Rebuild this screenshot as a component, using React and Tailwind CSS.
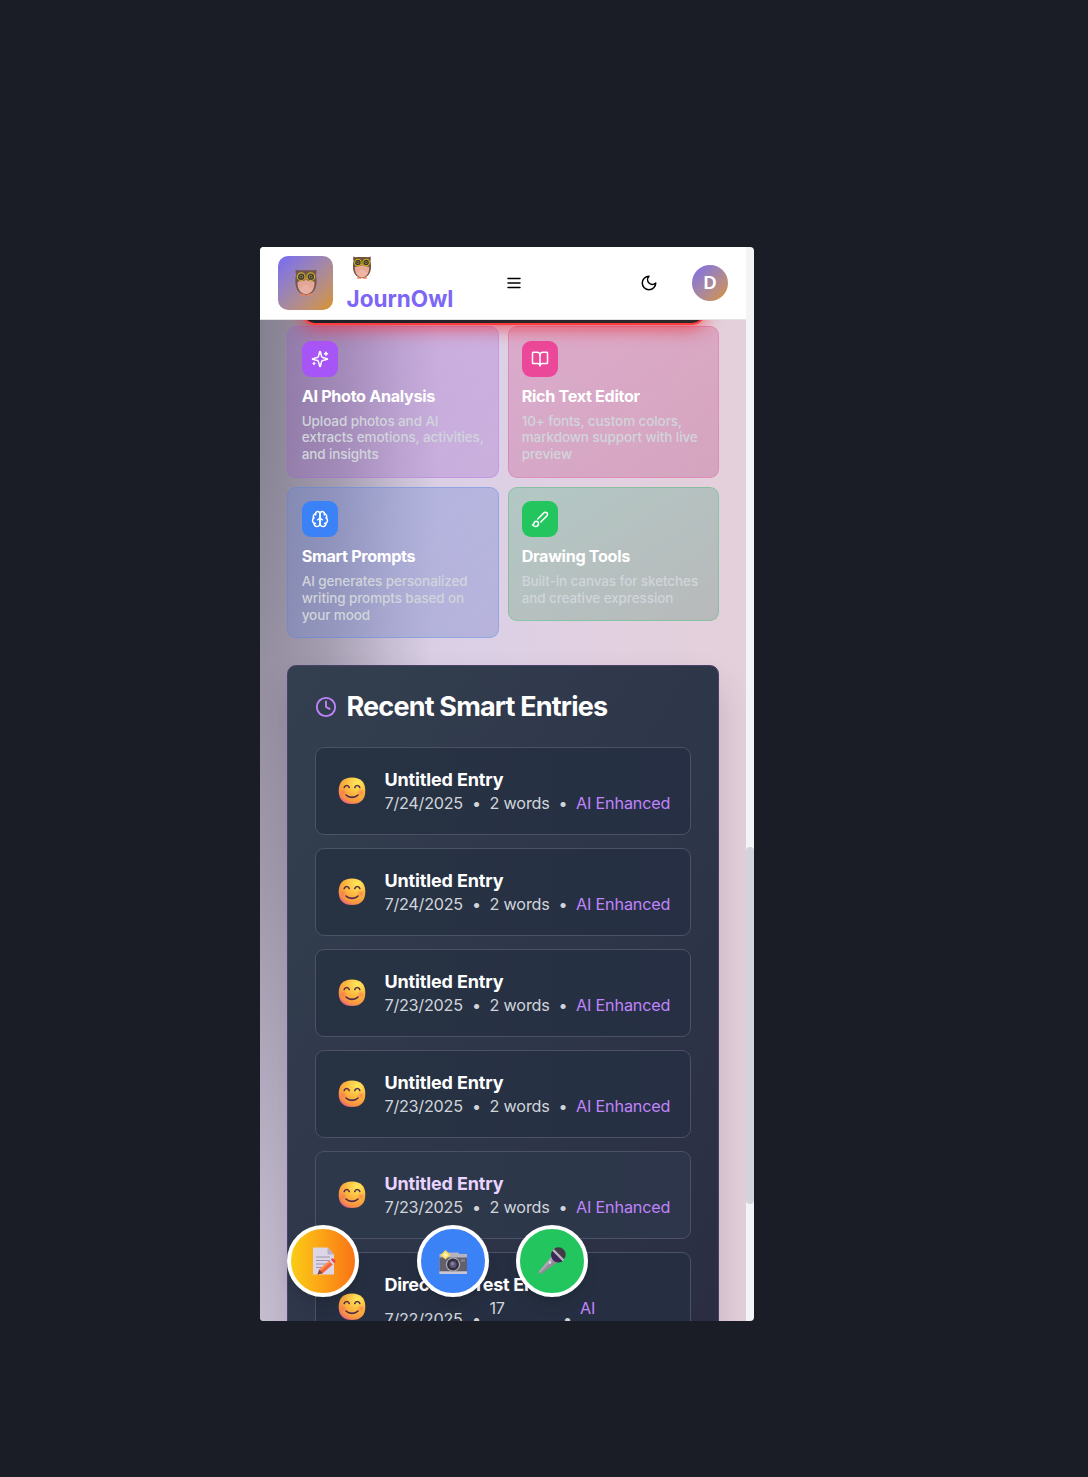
import React from "react";
import { BookOpen, Clock } from "lucide-react";

function Stroke({ size = 18, paths, className }) {
  return (
    <svg width={size} height={size} viewBox="0 0 24 24" fill="none" stroke="currentColor" strokeWidth="2" strokeLinecap="round" strokeLinejoin="round" className={className}>
      {paths.map((d) => <path key={d} d={d} />)}
    </svg>
  );
}

const Menu = (p) => <Stroke {...p} paths={["M4 6h16", "M4 12h16", "M4 18h16"]} />;
const Moon = (p) => <Stroke {...p} paths={["M12 3a6 6 0 0 0 9 9 9 9 0 1 1-9-9Z"]} />;
const Sparkles = (p) => (
  <Stroke {...p} paths={[
    "M9.937 15.5A2 2 0 0 0 8.5 14.063l-6.135-1.582a.5.5 0 0 1 0-.962L8.5 9.936A2 2 0 0 0 9.937 8.5l1.582-6.135a.5.5 0 0 1 .963 0L14.063 8.5A2 2 0 0 0 15.5 9.937l6.135 1.581a.5.5 0 0 1 0 .964L15.5 14.063a2 2 0 0 0-1.437 1.437l-1.582 6.135a.5.5 0 0 1-.963 0z",
    "M20 3v4", "M22 5h-4", "M4 17v2", "M5 18H3",
  ]} />
);
const Brain = (p) => (
  <Stroke {...p} paths={[
    "M12 5a3 3 0 1 0-5.997.125 4 4 0 0 0-2.526 5.77 4 4 0 0 0 .556 6.588A4 4 0 1 0 12 18Z",
    "M12 5a3 3 0 1 1 5.997.125 4 4 0 0 1 2.526 5.77 4 4 0 0 1-.556 6.588A4 4 0 1 1 12 18Z",
    "M15 13a4.5 4.5 0 0 1-3-4 4.5 4.5 0 0 1-3 4",
    "M17.599 6.5a3 3 0 0 0 .399-1.375", "M6.003 5.125A3 3 0 0 0 6.401 6.5",
    "M3.477 10.896a4 4 0 0 1 .585-.396", "M19.938 10.5a4 4 0 0 1 .585.396",
    "M6 18a4 4 0 0 1-1.967-.516", "M19.967 17.484A4 4 0 0 1 18 18",
  ]} />
);
const Brush = (p) => (
  <Stroke {...p} paths={[
    "m9.06 11.9 8.07-8.06a2.85 2.85 0 1 1 4.03 4.03l-8.06 8.08",
    "M7.07 14.94c-1.66 0-3 1.35-3 3.02 0 1.33-2.5 1.52-2 2.02 1.08 1.1 2.49 2.02 4 2.02 2.2 0 4-1.8 4-4.04a3.01 3.01 0 0 0-3-3.02z",
  ]} />
);

function Owl({ className }) {
  return (
    <svg viewBox="0 0 22 28" className={className}>
      <path d="M5 26h5v1.6H5zM12 26h5v1.6h-5z" fill="#ff7f50" />
      <path d="M.5.5C2 1.6 4.5 1.4 7 1.2h8c2.500.2 5 .4 6.500-.7.5 2 .2 4-.2 5.500.5 2 .7 4 .7 7 0 8-4 13.500-11 13.500S0 21 0 13c0-3 .2-5 .7-7C.3 4.500 0 2.500.5.500z" fill="#70503f" />
      <path d="M2.200 13.500C5 12 8 13.500 11 11c3 2.500 6 1 8.800 2.500.4 7-3 12.500-8.800 12.500S1.800 20.500 2.200 13.500z" fill="#e8aa98" />
      <path d="M4 21c1-2 3-1 4-3s4-2 6 0 3 1 4 3c-2 3-4 5-7 5s-5-2-7-5z" fill="#f2b9a6" opacity=".7" />
      <circle cx="6" cy="8" r="4" fill="#40362c" stroke="#c9b31e" strokeWidth="1.250" />
      <circle cx="16" cy="8" r="4" fill="#40362c" stroke="#c9b31e" strokeWidth="1.250" />
      <circle cx="6" cy="8" r="1.700" fill="#9c9b3a" />
      <circle cx="16" cy="8" r="1.700" fill="#9c9b3a" />
      <circle cx="6" cy="8" r=".9" fill="#19171a" />
      <circle cx="16" cy="8" r=".9" fill="#19171a" />
      <path d="M9.800 9.500h2.400L11 12.500z" fill="#f58a42" />
    </svg>
  );
}

function Smile() {
  return (
    <svg viewBox="0 0 28 28" className="size-[28px] shrink-0">
      <defs>
        <radialGradient id="face" cx=".7" cy=".2" r=".9">
          <stop offset="0" stopColor="#ffea5c" />
          <stop offset=".5" stopColor="#fcb63e" />
          <stop offset=".82" stopColor="#f79342" />
          <stop offset="1" stopColor="#e85b86" />
        </radialGradient>
        <radialGradient id="cheek">
          <stop offset="0" stopColor="#fa6a50" stopOpacity=".6" />
          <stop offset="1" stopColor="#fa6a50" stopOpacity="0" />
        </radialGradient>
      </defs>
      <path d="M14 .5c9 0 13.300 4.800 13.300 13.300S23 27.100 14 27.100.700 22.300.700 13.800 5 .5 14 .5z" fill="url(#face)" />
      <circle cx="5" cy="15.500" r="4" fill="url(#cheek)" />
      <circle cx="23" cy="15.500" r="4" fill="url(#cheek)" />
      <path d="M6.200 10.500c.8-2.600 4.200-2.600 5 0M16.800 10.500c.8-2.600 4.200-2.600 5 0M8 18c3 3.200 9 3.200 12 0" fill="none" stroke="#512b4b" strokeWidth="1.600" strokeLinecap="round" />
    </svg>
  );
}

function Memo() {
  return (
    <svg viewBox="0 0 28 28" className="size-[28px]">
      <path d="M4 .5h14.500l6.500 7V27.500H4z" fill="#dcd6e6" />
      <path d="M18.500.5l6.500 7h-5.500c-.6 0-1-.4-1-1z" fill="#b9aecb" />
      <path d="M7 10h14M7 13.500h14M7 17h11M7 20.500h6" stroke="#9d94ad" strokeWidth="1.100" />
      <path d="M8.500 27.500l1.800-5 10-8.800 3.500 3.800-10 8.700z" fill="#f3643b" />
      <path d="M10.300 22.500l10-8.800 1.300 1.400-10.100 8.900z" fill="#ff9353" />
      <path d="M20.300 13.700l1.500-1.300 3.500 3.800-1.500 1.300z" fill="#d7d4e5" />
      <path d="M21.800 12.400l1.200-1c1-.9 4.400 2.800 3.500 3.700l-1.200 1.100z" fill="#ef4454" />
      <path d="M8.500 27.500l1.800-5 3.500 3.700z" fill="#804b46" />
    </svg>
  );
}

function Camera() {
  return (
    <svg viewBox="0 0 28 28" className="size-[28px]">
      <path d="M9 5.500h10l1.500 1.500H28V27H.5V7h7z" fill="#b7b2c0" />
      <path d="M.5 10.500H28v14H.5z" fill="#62606b" />
      <path d="M.5 24.500H28V27H.5z" fill="#cbc5d3" />
      <path d="M22 12.500h4v2h-4z" fill="#8c8895" />
      <circle cx="14" cy="17.500" r="7.200" fill="#aaa6b2" />
      <circle cx="14" cy="17.500" r="5.900" fill="#343039" />
      <circle cx="14" cy="17.500" r="3.600" fill="#5b5578" />
      <circle cx="13.500" cy="16.700" r="1.800" fill="#8782a4" />
      <path d="M6.500 3L11.500 8 6.500 12.500 1.500 8z" fill="#fbd65a" />
      <path d="M6.500 5l2.800 3-2.800 2.700L3.700 8z" fill="#fff0a8" />
    </svg>
  );
}

function Mic() {
  return (
    <svg viewBox="0 0 28 28" className="size-[28px]">
      <path d="M13.500 9.500L.8 24.600c-.8 1.300 1 3 2.400 2.400L19 15.500z" fill="#938b9a" />
      <path d="M13.500 9.500L.8 24.600l1 1.500L16 12z" fill="#aea6b3" />
      <circle cx="20.500" cy="7.500" r="7.200" fill="#413b48" />
      <path d="M13.200 7.500c0 4 2 8 7.300 8 2 0 3.500-.7 4.500-1.700L15 3.500c-1 1-1.800 2.500-1.800 4z" fill="#3d2758" />
      <path d="M14.200 3.800l1.700-1.700 10.300 10.300-1.500 1.800z" fill="#b9b2be" />
      <circle cx="12" cy="15.500" r="1.200" fill="#e5e1e8" />
    </svg>
  );
}

const features = [
  {
    title: "AI Photo Analysis", lines: ["Upload photos and AI", "extracts emotions, activities,", "and insights"], Icon: Sparkles,
    card: "h-[152px] pl-[14px] pt-[14px] border-[#a855f7]/25 bg-linear-to-br from-[#9f55d8]/26 to-[#9f62c8]/30", tile: "bg-[#a855f7]", leading: "leading-[16.4px]",
  },
  {
    title: "Rich Text Editor", lines: ["10+ fonts, custom colors,", "markdown support with live", "preview"], Icon: BookOpen,
    card: "h-[152px] pl-[13px] pt-[14px] border-[#ec4899]/30 bg-linear-to-br from-[#d66fa4]/38 to-[#c26f9c]/45", tile: "bg-[#ec4899]", leading: "leading-[16.4px]",
  },
  {
    title: "Smart Prompts", lines: ["AI generates personalized", "writing prompts based on", "your mood"], Icon: Brain,
    card: "h-[151px] pl-[14px] pt-[13px] border-[#3b82f6]/30 bg-linear-to-br from-[#6b87dc]/35 to-[#7f89cc]/40", tile: "bg-[#3b82f6]", leading: "leading-[17px]",
  },
  {
    title: "Drawing Tools", lines: ["Built-in canvas for sketches", "and creative expression"], Icon: Brush,
    card: "h-[134px] pl-[13px] pt-[13px] border-[#22c55e]/30 bg-linear-to-br from-[#b2c8c4] to-[#b8b9bb]", tile: "bg-[#22c55e]", leading: "leading-[17px]",
  },
];

function FeatureCard({ title, lines, Icon, card, tile, leading }) {
  return (
    <div className={`rounded-[9px] border ${card}`}>
      <div className={`flex size-[36px] items-center justify-center rounded-[9px] text-white ${tile}`}>
        <Icon size={18} />
      </div>
      <h3 className="mt-[8px] -ml-[0.3px] text-[16.2px] leading-[23px] font-[650] tracking-[-0.33px] whitespace-nowrap text-white">{title}</h3>
      <p className={`mt-[5px] -ml-[0.3px] text-[13.5px] font-[450] tracking-[-0.1px] whitespace-nowrap text-[#d1d5db] ${leading}`}>
        {lines.map((l) => <span key={l} className="block">{l}</span>)}
      </p>
    </div>
  );
}

const dates = ["7/24/2025", "7/24/2025", "7/23/2025", "7/23/2025", "7/23/2025"];

function Entry({ date, active }) {
  return (
    <div className={`flex h-[88px] items-center rounded-[9px] border border-[#4c5165] pl-[22px] pb-px ${active ? "bg-linear-to-r from-[#2d394a] to-[#2d364a]" : "bg-linear-to-r from-[#273343] to-[#262f43]"}`}>
      <Smile />
      <div className="mt-px ml-[18.500px] whitespace-nowrap">
        <h4 className={`text-[18px] leading-[25px] font-[650] tracking-[-0.14px] ${active ? "text-[#e9d5ff]" : "text-white"}`}>Untitled Entry</h4>
        <div className="flex text-[16.2px] leading-[23px] font-[420] tracking-[-0.25px] text-[#d1d5db]">
          <span className="w-[87.500px]">{date}</span><span className="w-[17.500px]">•</span><span className="w-[69px] tracking-[-0.17px]">2 words</span><span className="w-[17.500px]">•</span><span className="tracking-[-0.17px] text-[#c084fc]">AI Enhanced</span>
        </div>
      </div>
    </div>
  );
}

export default function App() {
  return (
    <div className="flex h-[1477px] w-[1088px] items-start bg-[#1a1d26] pt-[247px] pl-[260px] font-['Inter',sans-serif]">
      <div className="relative flex h-[1074px] w-[494px] overflow-hidden rounded-[4px] bg-[#f3f4f6]">
        <div className="flex w-[486px] flex-col">
          <header className="z-20 flex h-[73px] shrink-0 items-center border-b border-[#e2e2e4] bg-white pl-[18px]">
            <div className="flex h-[54px] w-[55px] items-center justify-center rounded-[10px] bg-linear-to-br from-[#7868f5] to-[#d99317]">
              <Owl className="mb-[2px] h-[27px] w-[22px] opacity-90" />
            </div>
            <div className="mt-[4px] ml-[13.500px] flex w-[107.500px] flex-col">
              <Owl className="ml-[6px] h-[23px] w-[18px]" />
              <span className="mt-[4px] text-[22.500px] leading-[31px] font-bold text-[#7c66f7]">JournOwl</span>
            </div>
            <Menu className="ml-[51px] text-black" />
            <Moon className="ml-[117px] text-black" />
            <div className="ml-[34px] flex size-[36px] items-center justify-center rounded-full bg-linear-to-br from-[#7d68ed] to-[#d99320] font-['Liberation_Sans',sans-serif] text-[18px] font-bold text-white">D</div>
          </header>
          <main className="relative h-[1001px] overflow-hidden bg-[radial-gradient(ellipse_190px_1150px_at_-10px_0px,rgba(40,42,55,.48),rgba(70,66,85,.33)_50%,rgba(90,85,110,.12)_80%,rgba(90,85,110,.0)_100%),linear-gradient(90deg,#d0c8da_0%,#dcd0e6_45%,#e2d0e0_72%,#e4d0da_100%)] px-[27px]">
            <div className="relative z-10 -mt-[40px] mr-[13px] ml-[14px] h-[45px] rounded-[14px] border-2 border-[#ff3b3b] bg-linear-to-r from-[#1f2028] to-[#302829] shadow-[0_3px_18px_rgba(239,40,50,.75)]" />
            <section className="mt-px grid grid-cols-[212px_211px] items-start gap-[9px]">
              {features.map((f) => <FeatureCard key={f.title} {...f} />)}
            </section>
            <section className="mt-[27px] h-[720px] rounded-[9px] border border-[#49406b] bg-linear-to-br from-[#333f4f] via-[#2e374a] to-[#2b2d42] px-[27px] pt-[23px] shadow-[0_20px_35px_rgba(50,25,65,.18)]">
              <h2 className="flex h-[36px] items-center gap-[9.500px] text-[27px] font-[650] tracking-[-0.820px] whitespace-nowrap text-white">
                <Clock size={22} className="text-[#c084fc]" />
                Recent Smart Entries
              </h2>
              <div className="mt-[22px] flex flex-col gap-[13px]">
                {dates.map((d, i) => <Entry key={i} date={d} active={i === 4} />)}
                <div className="flex h-[112px] items-center rounded-[9px] border border-[#4c5165] bg-[#262f41] pb-[2px] pl-[22px]">
                  <Smile />
                  <div className="ml-[18.500px]">
                    <h4 className="text-[18px] leading-[25px] font-[650] tracking-[-0.3px] whitespace-nowrap text-white">Direct API Test Entry</h4>
                    <div className="flex items-center text-[16.2px] leading-[23px] font-[420] tracking-[-0.25px] text-[#d1d5db]">
                      <span className="w-[87.500px]">7/22/2025</span>
                      <span className="w-[17.500px]">•</span>
                      <span className="w-[73.500px]">17<br />words</span>
                      <span className="w-[17px]">•</span>
                      <span className="text-[#c084fc]">AI<br />Enhanced</span>
                    </div>
                  </div>
                </div>
              </div>
            </section>
          </main>
        </div>
        <div className="h-full w-[8px] pt-[600px]">
          <div className="h-[357px] w-[8px] rounded-[4px] bg-[#d1d5db]" />
        </div>
        <div className="absolute top-[978px] left-[27px] z-30 flex">
          <button className="flex size-[72px] items-center justify-center rounded-full border-4 border-white bg-linear-to-r from-[#facc15] to-[#f97316] shadow-lg"><Memo /></button>
          <button className="ml-[58.400px] flex size-[72px] items-center justify-center rounded-full border-4 border-white bg-[#3b82f6] shadow-lg"><Camera /></button>
          <button className="ml-[27px] flex size-[72px] items-center justify-center rounded-full border-4 border-white bg-[#22c55e] shadow-lg"><Mic /></button>
        </div>
      </div>
    </div>
  );
}
